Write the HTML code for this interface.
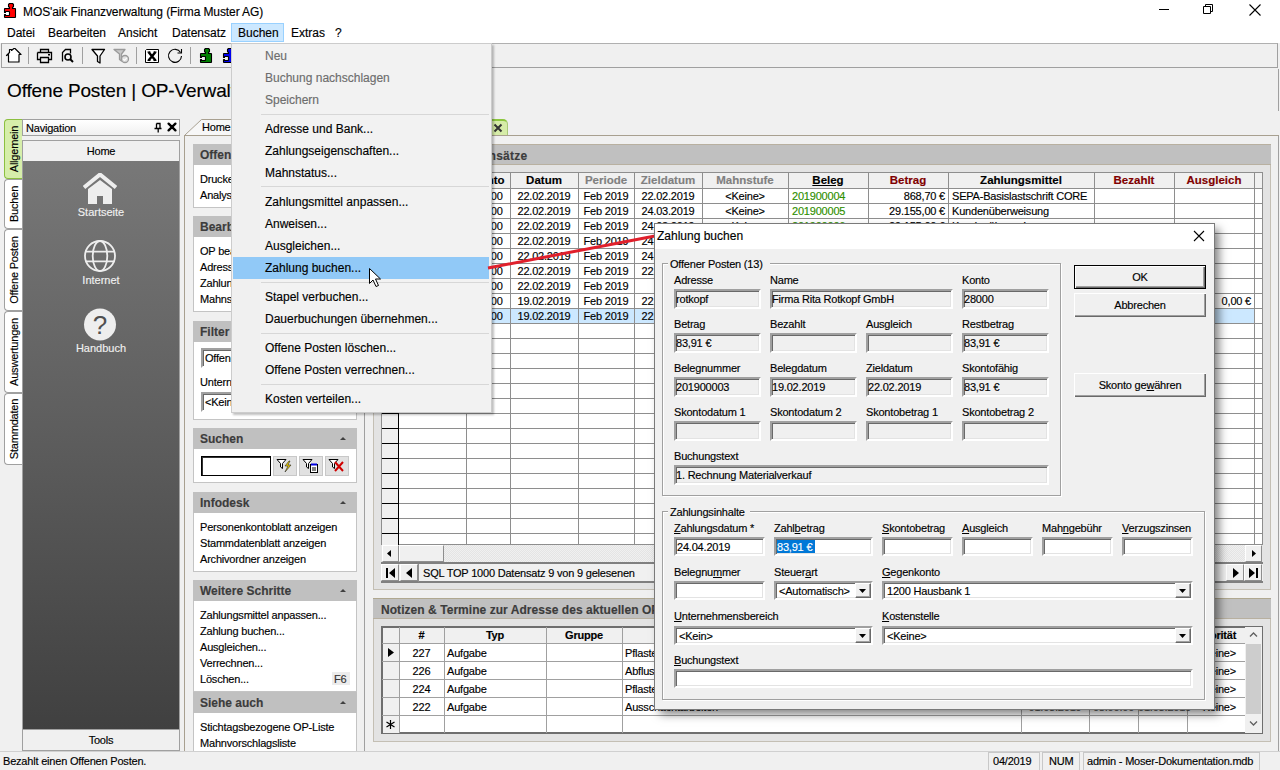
<!DOCTYPE html>
<html><head><meta charset="utf-8">
<style>
*{box-sizing:border-box;margin:0;padding:0}
html,body{width:1280px;height:770px;overflow:hidden;background:#f0f0f0;font-family:"Liberation Sans",sans-serif;font-size:11px;color:#000;position:relative;letter-spacing:-0.2px;-webkit-text-stroke:0.15px currentColor}
.a{position:absolute}
.t{position:absolute;white-space:nowrap;line-height:1}
.sep{position:absolute;width:1px;background:#a0a0a0}
.vtab{position:absolute;left:4px;width:18px;background:#fff;border:1px solid #a0a0a0;border-right:0;border-radius:4px 0 0 4px}
.vtab span{position:absolute;left:50%;top:50%;transform:translate(-50%,-50%) rotate(-90deg);white-space:nowrap;font-size:11px;line-height:1}
.sec-h{position:absolute;left:193px;width:164px;height:21px;background:#c0c0c0;font-weight:bold;color:#3c3c3c;font-size:12px;letter-spacing:0}
.sec-h span{position:absolute;left:7px;top:5px;white-space:nowrap;line-height:1}
.sec-h i{position:absolute;right:11px;top:9px;width:0;height:0;border-left:3px solid transparent;border-right:3px solid transparent;border-bottom:3px solid #404040}
.sec-b{position:absolute;left:193px;width:164px;background:#fff;border:1px solid #c4c4c4;border-top:0}
.sec-b div{position:absolute;left:6px;white-space:nowrap;line-height:1;font-size:11px;color:#000}
.mi{position:absolute;left:265px;letter-spacing:0;font-size:12px;white-space:nowrap;line-height:1}
.mi.dis{color:#6d6d6d}
.msep{position:absolute;left:261px;width:228px;height:1px;background:#d7d7d7}
.lbl{position:absolute;white-space:nowrap;font-size:11px;line-height:1}
.fld{position:absolute;height:20px;border:1px solid;border-color:#a0a0a0 #fff #fff #a0a0a0;background:#f0f0f0;font-size:11px;white-space:nowrap;overflow:hidden}
.fld span{position:absolute;left:3px;top:4px;line-height:1}
.btn{position:absolute;height:24px;border:1px solid #adadad;background:#e1e1e1;text-align:center;font-size:11px}
</style></head><body>
<!-- title bar + menu -->
<div class="a" style="left:0;top:0;width:1280px;height:43px;background:#fff"></div>
<svg class="a" style="left:0;top:0" width="20" height="20" viewBox="0 0 20 20"><path d="M9.5 3.5H12.5L13.5 4.5V6.5L12.5 7.5V8.5H15L15.5 9V17L15 17.5H5L4.5 17V14.5H5.5V15.5H9L9.5 15V12L9 11.5H5.5V12.5H4.5V9L5 8.5H9.5V7.5L8.5 6.5V4.5Z" fill="#f00" stroke="#000" stroke-width="1.1" stroke-linejoin="round"/></svg>
<div class="t" style="left:23px;top:6px;font-size:12px;letter-spacing:-0.1px;color:#000">MOS'aik Finanzverwaltung (Firma Muster AG)</div>
<svg class="a" style="left:1159px;top:4px" width="12" height="12"><path d="M0 5.5h10" stroke="#000" stroke-width="1"/></svg>
<svg class="a" style="left:1203px;top:4px" width="12" height="12"><path d="M0.5 2.5h7v7h-7z M2.5 2.5v-2h7v7h-2" fill="none" stroke="#000" stroke-width="1"/></svg>
<svg class="a" style="left:1249px;top:4px" width="12" height="12"><path d="M0.5 0.5l11 11M11.5 0.5l-11 11" stroke="#000" stroke-width="1.1"/></svg>
<div class="a" style="left:231px;top:23px;width:53px;height:19px;background:#cce8ff;border:1px solid #99d1ff"></div>
<div class="t" style="left:7px;top:27px;font-size:12px;letter-spacing:0">Datei</div>
<div class="t" style="left:48px;top:27px;font-size:12px;letter-spacing:0">Bearbeiten</div>
<div class="t" style="left:118px;top:27px;font-size:12px;letter-spacing:0">Ansicht</div>
<div class="t" style="left:172px;top:27px;font-size:12px;letter-spacing:0">Datensatz</div>
<div class="t" style="left:238px;top:27px;font-size:12px;letter-spacing:0">Buchen</div>
<div class="t" style="left:291px;top:27px;font-size:12px;letter-spacing:0">Extras</div>
<div class="t" style="left:335px;top:27px;font-size:12px;letter-spacing:0">?</div>
<!-- toolbar -->
<div class="a" style="left:1px;top:43px;width:1277px;height:25px;border:1px solid #a0a0a0;border-top-color:#b0b0b0;background:#f0f0f0"></div>
<div class="sep" style="left:28px;top:47px;height:17px"></div>
<div class="sep" style="left:82px;top:47px;height:17px"></div>
<div class="sep" style="left:136px;top:47px;height:17px"></div>
<div class="sep" style="left:190px;top:47px;height:17px"></div>
<svg class="a" style="left:5px;top:48px" width="17" height="16" viewBox="0 0 17 16"><path d="M1.5 7.5l3-3v-3h2v1l3-2.5 6.5 6.5h-2v7.5h-10.5v-7.5z" fill="#fff" stroke="#000" stroke-width="1.2" stroke-linejoin="round"/></svg>
<svg class="a" style="left:36px;top:48px" width="17" height="16" viewBox="0 0 17 16"><path d="M4.5 4.5v-3h8v3M1.5 4.5h14v7h-3M4.5 11.5h-3v-7M4.5 9.5h8v5h-8z" fill="none" stroke="#000" stroke-width="1.3"/><rect x="12" y="6" width="2" height="1.5" fill="#000"/></svg>
<svg class="a" style="left:60px;top:48px" width="15" height="16" viewBox="0 0 15 16"><path d="M2.5 13.5v-9l3-3h5v4" fill="none" stroke="#000" stroke-width="1.3"/><circle cx="8" cy="9" r="3" fill="none" stroke="#000" stroke-width="1.6"/><path d="M10 11l3 3" stroke="#000" stroke-width="2"/></svg>
<svg class="a" style="left:91px;top:48px" width="15" height="16" viewBox="0 0 15 16"><path d="M1 1.5h12.5l-4.5 6.5v7l-2.5-1.5v-5.5z" fill="#fff" stroke="#000" stroke-width="1.3" stroke-linejoin="round"/></svg>
<svg class="a" style="left:113px;top:48px" width="17" height="16" viewBox="0 0 17 16"><path d="M1 1.5h11l-3.5 4.5v7l-2-1.5v-5.5z" fill="#c8c8c8" stroke="#9a9a9a" stroke-width="1.3" stroke-linejoin="round"/><circle cx="12" cy="11" r="3.5" fill="#e0e0e0" stroke="#9a9a9a" stroke-width="1.3"/><path d="M10.3 11l1.3 1.3 2.2-2.5" fill="none" stroke="#fff" stroke-width="1.1"/></svg>
<svg class="a" style="left:144px;top:48px" width="16" height="16" viewBox="0 0 16 16"><path d="M1.5 2.5L2.5 1.5H14.5V14.5H1.5Z" fill="#fff" stroke="#000" stroke-width="1"/><path d="M4.5 4l7 8.5M11.5 4l-7 8.5" stroke="#000" stroke-width="2.4"/><path d="M3.5 4h3M9.5 4h3M3.5 12.5h3M9.5 12.5h3" stroke="#000" stroke-width="1"/></svg>
<svg class="a" style="left:167px;top:48px" width="16" height="16" viewBox="0 0 16 16"><path d="M13.6 4.5A6.5 6.5 0 1 0 14.5 8" fill="none" stroke="#000" stroke-width="1.1"/><path d="M10.5 5H14.5V1" fill="none" stroke="#000" stroke-width="1.1"/></svg>
<svg class="a" style="left:196px;top:45px" width="20" height="20" viewBox="0 0 20 20"><path d="M9.5 3.5H12.5L13.5 4.5V6.5L12.5 7.5V8.5H15L15.5 9V17L15 17.5H5L4.5 17V14.5H5.5V15.5H9L9.5 15V12L9 11.5H5.5V12.5H4.5V9L5 8.5H9.5V7.5L8.5 6.5V4.5Z" fill="#008000" stroke="#000" stroke-width="1.1" stroke-linejoin="round"/></svg>
<svg class="a" style="left:219px;top:45px" width="20" height="20" viewBox="0 0 20 20"><path d="M9.5 3.5H12.5L13.5 4.5V6.5L12.5 7.5V8.5H15L15.5 9V17L15 17.5H5L4.5 17V14.5H5.5V15.5H9L9.5 15V12L9 11.5H5.5V12.5H4.5V9L5 8.5H9.5V7.5L8.5 6.5V4.5Z" fill="#0000f0" stroke="#000" stroke-width="1.1" stroke-linejoin="round"/></svg>
<!-- page title -->
<div class="t" style="left:7px;top:81px;font-size:19px;letter-spacing:-0.15px">Offene Posten | OP-Verwaltung</div>
<div class="a" style="left:1278px;top:69px;width:1px;height:42px;background:#a0a0a0"></div>
<!-- left vertical tabs -->
<div class="vtab" style="top:119px;height:60px;background:#d6eeaa;border-color:#8cbf40"><span>Allgemein</span></div>
<div class="vtab" style="top:179px;height:50px"><span>Buchen</span></div>
<div class="vtab" style="top:229px;height:82px"><span>Offene Posten</span></div>
<div class="vtab" style="top:311px;height:82px"><span>Auswertungen</span></div>
<div class="vtab" style="top:393px;height:72px"><span>Stammdaten</span></div>
<!-- navigation panel -->
<div class="a" style="left:22px;top:119px;width:158px;height:17px;border:1px solid #a0a0a0;background:linear-gradient(#fff,#f0f0f0)"></div>
<div class="t" style="left:26px;top:123px;font-size:11px">Navigation</div>
<svg class="a" style="left:153px;top:122px" width="10" height="11"><path d="M3.5 1.5h3.5v4.5M3.5 1.5v4.5M1.5 6.5h7M5.2 6.5v4" fill="none" stroke="#000" stroke-width="1.3"/></svg>
<svg class="a" style="left:167px;top:122px" width="10" height="10"><path d="M1.6 1.6l6.8 6.8M8.4 1.6l-6.8 6.8" stroke="#000" stroke-width="2.3" stroke-linecap="round"/></svg>
<div class="a" style="left:22px;top:140px;width:158px;height:611px;border:1px solid #a0a0a0;background:#f0f0f0"></div>
<div class="t" style="left:22px;top:146px;width:158px;text-align:center;font-size:11px">Home</div>
<div class="a" style="left:23px;top:161px;width:156px;height:568px;background:linear-gradient(#787878,#404040)"></div>
<div class="a" style="left:23px;top:729px;width:156px;height:1px;background:#a0a0a0"></div>
<div class="t" style="left:22px;top:735px;width:158px;text-align:center;font-size:11px">Tools</div>
<!-- nav icons -->
<svg class="a" style="left:83px;top:173px" width="34" height="32" viewBox="0 0 34 32"><path d="M1 14.5L17 1.5 33 14.5" fill="none" stroke="#eee" stroke-width="4"/><path d="M5 16L17 7 29 16v15H20v-8h-6v8H5z" fill="#eee"/></svg>
<div class="t" style="left:22px;top:207px;width:158px;text-align:center;font-size:11px;letter-spacing:0;color:#f0f0f0">Startseite</div>
<svg class="a" style="left:83px;top:239px" width="34" height="34" viewBox="0 0 34 34"><g fill="none" stroke="#eee" stroke-width="1.8"><circle cx="17" cy="17" r="15"/><ellipse cx="17" cy="17" rx="7.3" ry="15"/><path d="M2.5 12.6h29M2.5 22.4h29"/></g></svg>
<div class="t" style="left:22px;top:275px;width:158px;text-align:center;font-size:11px;letter-spacing:0;color:#f0f0f0">Internet</div>
<svg class="a" style="left:83px;top:308px" width="34" height="34" viewBox="0 0 34 34"><circle cx="17" cy="16.5" r="16" fill="#eee"/><text x="17" y="26" text-anchor="middle" font-family="Liberation Sans" font-size="26" fill="#505050">?</text></svg>
<div class="t" style="left:22px;top:343px;width:158px;text-align:center;font-size:11px;letter-spacing:0;color:#f0f0f0">Handbuch</div>
<!-- status bar -->
<div class="a" style="left:0;top:751px;width:1280px;height:19px;background:#f0f0f0;border-top:1px solid #d0d0d0"></div>
<div class="t" style="left:3px;top:756px;font-size:11px">Bezahlt einen Offenen Posten.</div>
<div class="a" style="left:988px;top:752px;width:52px;height:18px;border:1px solid #c8c8c8;border-bottom:0"></div>
<div class="t" style="left:993px;top:756px;font-size:11px">04/2019</div>
<div class="a" style="left:1042px;top:752px;width:38px;height:18px;border:1px solid #c8c8c8;border-bottom:0"></div>
<div class="t" style="left:1049px;top:756px;font-size:11px">NUM</div>
<div class="a" style="left:1083px;top:752px;width:177px;height:18px;border:1px solid #c8c8c8;border-bottom:0"></div>
<div class="t" style="left:1087px;top:756px;font-size:11px">admin - Moser-Dokumentation.mdb</div>
<!-- tab strip -->
<svg class="a" style="left:184px;top:118px" width="330" height="19"><path d="M0.5 17.5L17.5 1.5H296" fill="none" stroke="#a8a090"/><path d="M1 18L18 2H295V18z" fill="#f7f7f7"/><path d="M18 1.5H295" stroke="#a8a090"/></svg>
<div class="t" style="left:202px;top:122px;font-size:11px">Home</div>
<div class="a" style="left:296px;top:119px;width:212px;height:17px;background:#d6eca8;border:1px solid #a8c878;border-top:2px solid #8cc63f;border-bottom:0;border-radius:0 5px 0 0"></div>
<svg class="a" style="left:493px;top:123px" width="10" height="10"><path d="M1.5 1.5l7 7M8.5 1.5l-7 7" stroke="#333" stroke-width="2"/></svg>
<!-- content border -->
<div class="a" style="left:184px;top:135px;width:1095px;height:616px;border:1px solid #a8a090;border-right:0;border-bottom:0;background:#f0f0f0"></div>
<div class="a" style="left:364px;top:136px;width:1px;height:615px;background:#a0a0a0"></div><div class="a" style="left:1278px;top:136px;width:1px;height:615px;background:#a0a0a0"></div>
<!-- task pane -->
<div class="sec-h" style="top:144px"><span>Offene Posten</span><i></i></div>
<div class="sec-b" style="top:165px;height:43px"><div style="top:9px">Drucken</div><div style="top:25px">Analyse</div></div>
<div class="sec-h" style="top:216px"><span>Bearbeiten</span><i></i></div>
<div class="sec-b" style="top:237px;height:75px"><div style="top:9px">OP bearbeiten</div><div style="top:25px">Adresse</div><div style="top:41px">Zahlungseigenschaften</div><div style="top:57px">Mahnstatus</div></div>
<div class="sec-h" style="top:321px"><span>Filter</span><i></i></div>
<div class="sec-b" style="top:342px;height:78px">
  <div style="top:6px;left:7px;width:150px;height:20px;border:2px solid;border-color:#a0a0a0 #fff #fff #a0a0a0;box-shadow:inset 1px 1px 0 #696969;background:#fff"></div><div style="top:11px;left:11px">Offene Posten</div>
  <div style="top:35px">Unternehmensbereich</div>
  <div style="top:50px;left:7px;width:150px;height:20px;border:2px solid;border-color:#a0a0a0 #fff #fff #a0a0a0;box-shadow:inset 1px 1px 0 #696969;background:#fff"></div><div style="top:55px;left:11px">&lt;Kein&gt;</div>
</div>
<div class="sec-h" style="top:428px"><span>Suchen</span><i></i></div>
<div class="sec-b" style="top:449px;height:34px"></div>
<div class="a" style="left:201px;top:456px;width:70px;height:20px;border:1px solid #000;box-shadow:inset 1px 1px 0 #333;background:#fff"></div>
<div class="a" style="left:273px;top:456px;width:24px;height:20px;background:#e1e1e1;border:1px solid #c8c8c8"></div>
<div class="a" style="left:299px;top:456px;width:24px;height:20px;background:#e1e1e1;border:1px solid #c8c8c8"></div>
<div class="a" style="left:325px;top:456px;width:24px;height:20px;background:#e1e1e1;border:1px solid #c8c8c8"></div>
<svg class="a" style="left:276px;top:458px" width="18" height="16"><path d="M1 1.5h9l-3.5 4v5l-2-1.5v-3.5z" fill="#fff" stroke="#000"/><path d="M13 3l-4 5h3l-3 6 6-7h-3l2-4z" fill="#f0d000" stroke="#222" stroke-width=".6"/></svg>
<svg class="a" style="left:302px;top:458px" width="18" height="16"><path d="M1 1.5h9l-3.5 4v5l-2-1.5v-3.5z" fill="#fff" stroke="#000"/><rect x="8.5" y="6.5" width="7" height="8" fill="#fff" stroke="#000"/><path d="M9 6.5h6" stroke="#0000e0" stroke-width="2"/><path d="M10 10h4M10 12h4" stroke="#000"/></svg>
<svg class="a" style="left:328px;top:458px" width="18" height="16"><path d="M1 1.5h9l-3.5 4v5l-2-1.5v-3.5z" fill="#fff" stroke="#000"/><path d="M7 4l8 9M15 4l-8 9" stroke="#d00000" stroke-width="2"/></svg>
<div class="sec-h" style="top:492px"><span>Infodesk</span><i></i></div>
<div class="sec-b" style="top:513px;height:59px"><div style="top:9px">Personenkontoblatt anzeigen</div><div style="top:25px">Stammdatenblatt anzeigen</div><div style="top:41px">Archivordner anzeigen</div></div>
<div class="sec-h" style="top:580px"><span>Weitere Schritte</span><i></i></div>
<div class="sec-b" style="top:601px;height:91px"><div style="top:9px">Zahlungsmittel anpassen...</div><div style="top:25px">Zahlung buchen...</div><div style="top:41px">Ausgleichen...</div><div style="top:57px">Verrechnen...</div><div style="top:73px">Löschen...</div><div style="top:71px;left:138px;width:18px;height:13px;background:#ececec"></div><div style="top:73px;left:140px;color:#333">F6</div></div>
<div class="sec-h" style="top:692px"><span>Siehe auch</span><i></i></div>
<div class="sec-b" style="top:713px;height:38px;border-bottom:0"><div style="top:9px">Stichtagsbezogene OP-Liste</div><div style="top:25px">Mahnvorschlagsliste</div></div>
<!-- main group -->

<div class="a" style="left:373px;top:144px;width:898px;height:21px;background:#c0c0c0;border-top:1px solid #b8b0a0;border-bottom:1px solid #b8b0a0"></div>
<div class="t" style="left:381px;top:150px;font-size:12px;letter-spacing:0.25px;font-weight:bold;color:#3c3c3c">Offene Posten / Umsätze</div>
<div class="a" style="left:373px;top:165px;width:898px;height:425px;border-left:1px solid #c4bfb4;border-right:1px solid #c4bfb4;border-bottom:1px solid #c4bfb4"></div>
<!--GRID1S--><div class="a" style="left:374px;top:165px;width:896px;height:424px;background:#e3e3e3"></div>
<div class="a" style="left:381px;top:172px;width:882px;height:373px;background:#fff;border:1px solid #8e8e8e"></div>
<div class="a" style="left:382px;top:173px;width:880px;height:15px;background:#f0f0f0"></div>
<div class="a" style="left:382px;top:188px;width:16px;height:357px;background:#f0f0f0"></div>
<div class="a" style="left:399px;top:309px;width:855px;height:14px;background:#cce8ff"></div>
<div class="a" style="left:382px;top:188px;width:16px;height:1px;background:#000"></div>
<div class="a" style="left:398px;top:188px;width:864px;height:1px;background:#8e8e8e"></div>
<div class="a" style="left:382px;top:203px;width:16px;height:1px;background:#000"></div>
<div class="a" style="left:398px;top:203px;width:864px;height:1px;background:#8e8e8e"></div>
<div class="a" style="left:382px;top:218px;width:16px;height:1px;background:#000"></div>
<div class="a" style="left:398px;top:218px;width:864px;height:1px;background:#8e8e8e"></div>
<div class="a" style="left:382px;top:233px;width:16px;height:1px;background:#000"></div>
<div class="a" style="left:398px;top:233px;width:864px;height:1px;background:#8e8e8e"></div>
<div class="a" style="left:382px;top:248px;width:16px;height:1px;background:#000"></div>
<div class="a" style="left:398px;top:248px;width:864px;height:1px;background:#8e8e8e"></div>
<div class="a" style="left:382px;top:263px;width:16px;height:1px;background:#000"></div>
<div class="a" style="left:398px;top:263px;width:864px;height:1px;background:#8e8e8e"></div>
<div class="a" style="left:382px;top:278px;width:16px;height:1px;background:#000"></div>
<div class="a" style="left:398px;top:278px;width:864px;height:1px;background:#8e8e8e"></div>
<div class="a" style="left:382px;top:293px;width:16px;height:1px;background:#000"></div>
<div class="a" style="left:398px;top:293px;width:864px;height:1px;background:#8e8e8e"></div>
<div class="a" style="left:382px;top:308px;width:16px;height:1px;background:#000"></div>
<div class="a" style="left:398px;top:308px;width:864px;height:1px;background:#8e8e8e"></div>
<div class="a" style="left:382px;top:323px;width:16px;height:1px;background:#000"></div>
<div class="a" style="left:398px;top:323px;width:864px;height:1px;background:#8e8e8e"></div>
<div class="a" style="left:382px;top:338px;width:16px;height:1px;background:#000"></div>
<div class="a" style="left:398px;top:338px;width:864px;height:1px;background:#8e8e8e"></div>
<div class="a" style="left:382px;top:353px;width:16px;height:1px;background:#000"></div>
<div class="a" style="left:398px;top:353px;width:864px;height:1px;background:#8e8e8e"></div>
<div class="a" style="left:382px;top:368px;width:16px;height:1px;background:#000"></div>
<div class="a" style="left:398px;top:368px;width:864px;height:1px;background:#8e8e8e"></div>
<div class="a" style="left:382px;top:383px;width:16px;height:1px;background:#000"></div>
<div class="a" style="left:398px;top:383px;width:864px;height:1px;background:#8e8e8e"></div>
<div class="a" style="left:382px;top:398px;width:16px;height:1px;background:#000"></div>
<div class="a" style="left:398px;top:398px;width:864px;height:1px;background:#8e8e8e"></div>
<div class="a" style="left:382px;top:413px;width:16px;height:1px;background:#000"></div>
<div class="a" style="left:398px;top:413px;width:864px;height:1px;background:#8e8e8e"></div>
<div class="a" style="left:382px;top:428px;width:16px;height:1px;background:#000"></div>
<div class="a" style="left:398px;top:428px;width:864px;height:1px;background:#8e8e8e"></div>
<div class="a" style="left:382px;top:443px;width:16px;height:1px;background:#000"></div>
<div class="a" style="left:398px;top:443px;width:864px;height:1px;background:#8e8e8e"></div>
<div class="a" style="left:382px;top:458px;width:16px;height:1px;background:#000"></div>
<div class="a" style="left:398px;top:458px;width:864px;height:1px;background:#8e8e8e"></div>
<div class="a" style="left:382px;top:473px;width:16px;height:1px;background:#000"></div>
<div class="a" style="left:398px;top:473px;width:864px;height:1px;background:#8e8e8e"></div>
<div class="a" style="left:382px;top:488px;width:16px;height:1px;background:#000"></div>
<div class="a" style="left:398px;top:488px;width:864px;height:1px;background:#8e8e8e"></div>
<div class="a" style="left:382px;top:503px;width:16px;height:1px;background:#000"></div>
<div class="a" style="left:398px;top:503px;width:864px;height:1px;background:#8e8e8e"></div>
<div class="a" style="left:382px;top:518px;width:16px;height:1px;background:#000"></div>
<div class="a" style="left:398px;top:518px;width:864px;height:1px;background:#8e8e8e"></div>
<div class="a" style="left:382px;top:533px;width:16px;height:1px;background:#000"></div>
<div class="a" style="left:398px;top:533px;width:864px;height:1px;background:#8e8e8e"></div>
<div class="a" style="left:398px;top:173px;width:1px;height:372px;background:#000"></div>
<div class="a" style="left:466px;top:173px;width:1px;height:372px;background:#8e8e8e"></div>
<div class="a" style="left:510px;top:173px;width:1px;height:372px;background:#8e8e8e"></div>
<div class="a" style="left:578px;top:173px;width:1px;height:372px;background:#8e8e8e"></div>
<div class="a" style="left:634px;top:173px;width:1px;height:372px;background:#8e8e8e"></div>
<div class="a" style="left:702px;top:173px;width:1px;height:372px;background:#8e8e8e"></div>
<div class="a" style="left:788px;top:173px;width:1px;height:372px;background:#8e8e8e"></div>
<div class="a" style="left:868px;top:173px;width:1px;height:372px;background:#8e8e8e"></div>
<div class="a" style="left:948px;top:173px;width:1px;height:372px;background:#8e8e8e"></div>
<div class="a" style="left:1094px;top:173px;width:1px;height:372px;background:#8e8e8e"></div>
<div class="a" style="left:1174px;top:173px;width:1px;height:372px;background:#8e8e8e"></div>
<div class="a" style="left:1254px;top:173px;width:1px;height:372px;background:#8e8e8e"></div>
<div class="t" style="left:466px;top:175px;width:44px;text-align:center;font-size:11.5px;letter-spacing:0;font-weight:bold;color:#000;">Konto</div>
<div class="t" style="left:510px;top:175px;width:68px;text-align:center;font-size:11.5px;letter-spacing:0;font-weight:bold;color:#000;">Datum</div>
<div class="t" style="left:578px;top:175px;width:56px;text-align:center;font-size:11.5px;letter-spacing:0;font-weight:bold;color:#808080;">Periode</div>
<div class="t" style="left:634px;top:175px;width:68px;text-align:center;font-size:11.5px;letter-spacing:0;font-weight:bold;color:#808080;">Zieldatum</div>
<div class="t" style="left:702px;top:175px;width:86px;text-align:center;font-size:11.5px;letter-spacing:0;font-weight:bold;color:#808080;">Mahnstufe</div>
<div class="t" style="left:788px;top:175px;width:80px;text-align:center;font-size:11.5px;letter-spacing:0;font-weight:bold;color:#000;text-decoration:underline;">Beleg</div>
<div class="t" style="left:868px;top:175px;width:80px;text-align:center;font-size:11.5px;letter-spacing:0;font-weight:bold;color:#800000;">Betrag</div>
<div class="t" style="left:948px;top:175px;width:146px;text-align:center;font-size:11.5px;letter-spacing:0;font-weight:bold;color:#000;">Zahlungsmittel</div>
<div class="t" style="left:1094px;top:175px;width:80px;text-align:center;font-size:11.5px;letter-spacing:0;font-weight:bold;color:#800000;">Bezahlt</div>
<div class="t" style="left:1174px;top:175px;width:80px;text-align:center;font-size:11.5px;letter-spacing:0;font-weight:bold;color:#800000;">Ausgleich</div>
<div class="t" style="left:473px;top:191px;font-size:11px;color:#000">28000</div>
<div class="t" style="left:510px;top:191px;width:68px;text-align:center;font-size:11px;color:#000">22.02.2019</div>
<div class="t" style="left:578px;top:191px;width:56px;text-align:center;font-size:11px;color:#000">Feb 2019</div>
<div class="t" style="left:634px;top:191px;width:68px;text-align:center;font-size:11px;color:#000">22.02.2019</div>
<div class="t" style="left:702px;top:191px;width:86px;text-align:center;font-size:11px;color:#000">&lt;Keine&gt;</div>
<div class="t" style="left:792px;top:191px;font-size:11px;color:#2f8f00">201900004</div>
<div class="t" style="left:868px;top:191px;width:77px;text-align:right;font-size:11px;color:#000">868,70 €</div>
<div class="t" style="left:952px;top:191px;font-size:11px;color:#000">SEPA-Basislastschrift CORE</div>
<div class="t" style="left:473px;top:206px;font-size:11px;color:#000">28000</div>
<div class="t" style="left:510px;top:206px;width:68px;text-align:center;font-size:11px;color:#000">22.02.2019</div>
<div class="t" style="left:578px;top:206px;width:56px;text-align:center;font-size:11px;color:#000">Feb 2019</div>
<div class="t" style="left:634px;top:206px;width:68px;text-align:center;font-size:11px;color:#000">24.03.2019</div>
<div class="t" style="left:702px;top:206px;width:86px;text-align:center;font-size:11px;color:#000">&lt;Keine&gt;</div>
<div class="t" style="left:792px;top:206px;font-size:11px;color:#2f8f00">201900005</div>
<div class="t" style="left:868px;top:206px;width:77px;text-align:right;font-size:11px;color:#000">29.155,00 €</div>
<div class="t" style="left:952px;top:206px;font-size:11px;color:#000">Kundenüberweisung</div>
<div class="t" style="left:473px;top:221px;font-size:11px;color:#000">28000</div>
<div class="t" style="left:510px;top:221px;width:68px;text-align:center;font-size:11px;color:#000">22.02.2019</div>
<div class="t" style="left:578px;top:221px;width:56px;text-align:center;font-size:11px;color:#000">Feb 2019</div>
<div class="t" style="left:634px;top:221px;width:68px;text-align:center;font-size:11px;color:#000">24.03.2019</div>
<div class="t" style="left:702px;top:221px;width:86px;text-align:center;font-size:11px;color:#000">&lt;Keine&gt;</div>
<div class="t" style="left:792px;top:221px;font-size:11px;color:#2f8f00">201900006</div>
<div class="t" style="left:868px;top:221px;width:77px;text-align:right;font-size:11px;color:#000">29.155,00 €</div>
<div class="t" style="left:952px;top:221px;font-size:11px;color:#000">Kundenüberweisung</div>
<div class="t" style="left:473px;top:236px;font-size:11px;color:#000">28000</div>
<div class="t" style="left:510px;top:236px;width:68px;text-align:center;font-size:11px;color:#000">22.02.2019</div>
<div class="t" style="left:578px;top:236px;width:56px;text-align:center;font-size:11px;color:#000">Feb 2019</div>
<div class="t" style="left:634px;top:236px;width:68px;text-align:center;font-size:11px;color:#000">24.03.2019</div>
<div class="t" style="left:702px;top:236px;width:86px;text-align:center;font-size:11px;color:#000">&lt;Keine&gt;</div>
<div class="t" style="left:792px;top:236px;font-size:11px;color:#2f8f00">201900007</div>
<div class="t" style="left:868px;top:236px;width:77px;text-align:right;font-size:11px;color:#000">29.155,00 €</div>
<div class="t" style="left:952px;top:236px;font-size:11px;color:#000">Kundenüberweisung</div>
<div class="t" style="left:473px;top:251px;font-size:11px;color:#000">28000</div>
<div class="t" style="left:510px;top:251px;width:68px;text-align:center;font-size:11px;color:#000">22.02.2019</div>
<div class="t" style="left:578px;top:251px;width:56px;text-align:center;font-size:11px;color:#000">Feb 2019</div>
<div class="t" style="left:634px;top:251px;width:68px;text-align:center;font-size:11px;color:#000">24.03.2019</div>
<div class="t" style="left:702px;top:251px;width:86px;text-align:center;font-size:11px;color:#000">&lt;Keine&gt;</div>
<div class="t" style="left:792px;top:251px;font-size:11px;color:#2f8f00">201900008</div>
<div class="t" style="left:868px;top:251px;width:77px;text-align:right;font-size:11px;color:#000">29.155,00 €</div>
<div class="t" style="left:952px;top:251px;font-size:11px;color:#000">Kundenüberweisung</div>
<div class="t" style="left:473px;top:266px;font-size:11px;color:#000">28000</div>
<div class="t" style="left:510px;top:266px;width:68px;text-align:center;font-size:11px;color:#000">22.02.2019</div>
<div class="t" style="left:578px;top:266px;width:56px;text-align:center;font-size:11px;color:#000">Feb 2019</div>
<div class="t" style="left:634px;top:266px;width:68px;text-align:center;font-size:11px;color:#000">22.02.2019</div>
<div class="t" style="left:702px;top:266px;width:86px;text-align:center;font-size:11px;color:#000">&lt;Keine&gt;</div>
<div class="t" style="left:792px;top:266px;font-size:11px;color:#2f8f00">201900009</div>
<div class="t" style="left:868px;top:266px;width:77px;text-align:right;font-size:11px;color:#000">868,70 €</div>
<div class="t" style="left:952px;top:266px;font-size:11px;color:#000">Kundenüberweisung</div>
<div class="t" style="left:473px;top:281px;font-size:11px;color:#000">28000</div>
<div class="t" style="left:510px;top:281px;width:68px;text-align:center;font-size:11px;color:#000">22.02.2019</div>
<div class="t" style="left:578px;top:281px;width:56px;text-align:center;font-size:11px;color:#000">Feb 2019</div>
<div class="t" style="left:702px;top:281px;width:86px;text-align:center;font-size:11px;color:#000">&lt;Keine&gt;</div>
<div class="t" style="left:792px;top:281px;font-size:11px;color:#2f8f00">201900010</div>
<div class="t" style="left:868px;top:281px;width:77px;text-align:right;font-size:11px;color:#000">868,70 €</div>
<div class="t" style="left:952px;top:281px;font-size:11px;color:#000">Kundenüberweisung</div>
<div class="t" style="left:473px;top:296px;font-size:11px;color:#000">28000</div>
<div class="t" style="left:510px;top:296px;width:68px;text-align:center;font-size:11px;color:#000">19.02.2019</div>
<div class="t" style="left:578px;top:296px;width:56px;text-align:center;font-size:11px;color:#000">Feb 2019</div>
<div class="t" style="left:634px;top:296px;width:68px;text-align:center;font-size:11px;color:#000">22.02.2019</div>
<div class="t" style="left:702px;top:296px;width:86px;text-align:center;font-size:11px;color:#000">&lt;Keine&gt;</div>
<div class="t" style="left:792px;top:296px;font-size:11px;color:#2f8f00">201900002</div>
<div class="t" style="left:868px;top:296px;width:77px;text-align:right;font-size:11px;color:#000">83,91 €</div>
<div class="t" style="left:952px;top:296px;font-size:11px;color:#000">Kundenüberweisung</div>
<div class="t" style="left:1174px;top:296px;width:77px;text-align:right;font-size:11px;color:#000">0,00 €</div>
<div class="t" style="left:473px;top:311px;font-size:11px;color:#000">28000</div>
<div class="t" style="left:510px;top:311px;width:68px;text-align:center;font-size:11px;color:#000">19.02.2019</div>
<div class="t" style="left:578px;top:311px;width:56px;text-align:center;font-size:11px;color:#000">Feb 2019</div>
<div class="t" style="left:634px;top:311px;width:68px;text-align:center;font-size:11px;color:#000">22.02.2019</div>
<div class="t" style="left:702px;top:311px;width:86px;text-align:center;font-size:11px;color:#000">&lt;Keine&gt;</div>
<div class="t" style="left:792px;top:311px;font-size:11px;color:#2f8f00">201900003</div>
<div class="t" style="left:868px;top:311px;width:77px;text-align:right;font-size:11px;color:#000">83,91 €</div>
<div class="t" style="left:952px;top:311px;font-size:11px;color:#000">Kundenüberweisung</div>
<div class="a" style="left:382px;top:545px;width:880px;height:17px;background:repeating-conic-gradient(#f0f0f0 0 25%,#e4e4e4 0 50%) 0 0/2px 2px"></div>
<div class="a" style="left:382px;top:545px;width:17px;height:17px;background:#f0f0f0;border:1px solid;border-color:#fff #8e8e8e #8e8e8e #fff"></div>
<svg class="a" style="left:386px;top:549px" width="8" height="9"><path d="M5 1v7L1 4.5z" fill="#000"/></svg>
<div class="a" style="left:399px;top:545px;width:45px;height:17px;background:#f0f0f0;border:1px solid;border-color:#fff #8e8e8e #8e8e8e #fff"></div>
<div class="a" style="left:1245px;top:545px;width:17px;height:17px;background:#f0f0f0;border:1px solid;border-color:#fff #8e8e8e #8e8e8e #fff"></div>
<svg class="a" style="left:1250px;top:549px" width="8" height="9"><path d="M2 1v7l4-3.5z" fill="#000"/></svg>
<div class="a" style="left:381px;top:562px;width:882px;height:2px;background:#808080"></div>
<div class="a" style="left:381px;top:564px;width:882px;height:19px;background:#f0f0f0;border-bottom:2px solid #808080"></div>
<div class="a" style="left:381px;top:564px;width:18px;height:17px;background:#f0f0f0;border:1px solid;border-color:#fff #8e8e8e #8e8e8e #fff"></div>
<div class="a" style="left:400px;top:564px;width:18px;height:17px;background:#f0f0f0;border:1px solid;border-color:#fff #8e8e8e #8e8e8e #fff"></div>
<div class="a" style="left:1226px;top:564px;width:18px;height:17px;background:#f0f0f0;border:1px solid;border-color:#fff #8e8e8e #8e8e8e #fff"></div>
<div class="a" style="left:1244px;top:564px;width:18px;height:17px;background:#f0f0f0;border:1px solid;border-color:#fff #8e8e8e #8e8e8e #fff"></div>
<div class="a" style="left:418px;top:564px;width:1px;height:18px;background:#8e8e8e"></div>
<svg class="a" style="left:385px;top:567px" width="11" height="12"><path d="M1 1h2v10H1z M10 1v10L4 6z" fill="#000"/></svg>
<svg class="a" style="left:404px;top:567px" width="11" height="12"><path d="M8 1v10L2 6z" fill="#000"/></svg>
<svg class="a" style="left:1230px;top:567px" width="11" height="12"><path d="M3 1v10l6-5z" fill="#000"/></svg>
<svg class="a" style="left:1248px;top:567px" width="11" height="12"><path d="M1 1v10l6-5z M8 1h2v10H8z" fill="#000"/></svg>
<div class="t" style="left:423px;top:568px;font-size:11px">SQL TOP 1000 Datensatz 9 von 9 gelesenen</div><!--GRID1E-->
<!-- notes group -->
<div class="a" style="left:373px;top:598px;width:898px;height:144px;border:1px solid #c4bfb4"></div>
<div class="a" style="left:373px;top:598px;width:898px;height:21px;background:#c0c0c0;border-top:1px solid #b0a890;border-bottom:1px solid #b8b0a0"></div>
<div class="t" style="left:381px;top:604px;font-size:12px;letter-spacing:0.05px;font-weight:bold;color:#3c3c3c">Notizen &amp; Termine zur Adresse des aktuellen OP</div>
<!--GRID2S--><div class="a" style="left:374px;top:619px;width:896px;height:122px;background:#e3e3e3"></div>
<div class="a" style="left:381px;top:626px;width:882px;height:108px;background:#fff;border:2px solid #6e6e6e"></div>
<div class="a" style="left:383px;top:628px;width:862px;height:15px;background:#f0f0f0"></div>
<div class="a" style="left:383px;top:643px;width:16px;height:90px;background:#f0f0f0"></div>
<div class="a" style="left:382px;top:643px;width:863px;height:1px;background:#a0a0a0"></div>
<div class="a" style="left:382px;top:661px;width:863px;height:1px;background:#a0a0a0"></div>
<div class="a" style="left:382px;top:679px;width:863px;height:1px;background:#a0a0a0"></div>
<div class="a" style="left:382px;top:697px;width:863px;height:1px;background:#a0a0a0"></div>
<div class="a" style="left:382px;top:715px;width:863px;height:1px;background:#a0a0a0"></div>
<div class="a" style="left:399px;top:627px;width:1px;height:106px;background:#a0a0a0"></div>
<div class="a" style="left:444px;top:627px;width:1px;height:106px;background:#a0a0a0"></div>
<div class="a" style="left:546px;top:627px;width:1px;height:106px;background:#a0a0a0"></div>
<div class="a" style="left:622px;top:627px;width:1px;height:106px;background:#a0a0a0"></div>
<div class="a" style="left:1021px;top:627px;width:1px;height:106px;background:#a0a0a0"></div>
<div class="a" style="left:1089px;top:627px;width:1px;height:106px;background:#a0a0a0"></div>
<div class="a" style="left:1138px;top:627px;width:1px;height:106px;background:#a0a0a0"></div>
<div class="a" style="left:1187px;top:627px;width:1px;height:106px;background:#a0a0a0"></div>
<div class="a" style="left:1245px;top:627px;width:1px;height:106px;background:#a0a0a0"></div>
<div class="t" style="left:399px;top:630px;width:45px;text-align:center;font-size:11px;font-weight:bold">#</div>
<div class="t" style="left:444px;top:630px;width:102px;text-align:center;font-size:11px;font-weight:bold">Typ</div>
<div class="t" style="left:546px;top:630px;width:76px;text-align:center;font-size:11px;font-weight:bold">Gruppe</div>
<div class="t" style="left:622px;top:630px;width:399px;text-align:center;font-size:11px;font-weight:bold">Betreff</div>
<div class="t" style="left:1021px;top:630px;width:68px;text-align:center;font-size:11px;font-weight:bold">Datum</div>
<div class="t" style="left:1089px;top:630px;width:49px;text-align:center;font-size:11px;font-weight:bold">Uhrzeit</div>
<div class="t" style="left:1138px;top:630px;width:49px;text-align:center;font-size:11px;font-weight:bold">Erledigt</div>
<div class="t" style="left:1187px;top:630px;width:58px;text-align:center;font-size:11px;font-weight:bold">Priorität</div>
<div class="t" style="left:399px;top:648px;width:45px;text-align:center;font-size:11px">227</div>
<div class="t" style="left:447px;top:648px;font-size:11px">Aufgabe</div>
<div class="t" style="left:625px;top:648px;font-size:11px">Pflasterarbeiten</div>
<div class="t" style="left:1021px;top:648px;width:68px;text-align:center;font-size:11px;color:#555">12.03.2019</div>
<div class="t" style="left:1089px;top:648px;width:49px;text-align:center;font-size:11px;color:#555">08:00:00</div>
<div class="t" style="left:1138px;top:648px;width:49px;text-align:center;font-size:11px;color:#555">12.03.2019</div>
<div class="t" style="left:1187px;top:648px;width:49px;text-align:right;font-size:11px">&lt;Keine&gt;</div>
<div class="t" style="left:399px;top:666px;width:45px;text-align:center;font-size:11px">226</div>
<div class="t" style="left:447px;top:666px;font-size:11px">Aufgabe</div>
<div class="t" style="left:625px;top:666px;font-size:11px">Abflussrohr verlegen</div>
<div class="t" style="left:1021px;top:666px;width:68px;text-align:center;font-size:11px;color:#555">11.03.2019</div>
<div class="t" style="left:1089px;top:666px;width:49px;text-align:center;font-size:11px;color:#555">08:00:00</div>
<div class="t" style="left:1138px;top:666px;width:49px;text-align:center;font-size:11px;color:#555">11.03.2019</div>
<div class="t" style="left:1187px;top:666px;width:49px;text-align:right;font-size:11px">&lt;Keine&gt;</div>
<div class="t" style="left:399px;top:684px;width:45px;text-align:center;font-size:11px">224</div>
<div class="t" style="left:447px;top:684px;font-size:11px">Aufgabe</div>
<div class="t" style="left:625px;top:684px;font-size:11px">Pflasterarbeiten</div>
<div class="t" style="left:1021px;top:684px;width:68px;text-align:center;font-size:11px;color:#555">05.03.2019</div>
<div class="t" style="left:1089px;top:684px;width:49px;text-align:center;font-size:11px;color:#555">08:00:00</div>
<div class="t" style="left:1138px;top:684px;width:49px;text-align:center;font-size:11px;color:#555">05.03.2019</div>
<div class="t" style="left:1187px;top:684px;width:49px;text-align:right;font-size:11px">&lt;Keine&gt;</div>
<div class="t" style="left:399px;top:702px;width:45px;text-align:center;font-size:11px">222</div>
<div class="t" style="left:447px;top:702px;font-size:11px">Aufgabe</div>
<div class="t" style="left:625px;top:702px;font-size:11px">Ausschachtarbeiten</div>
<div class="t" style="left:1021px;top:702px;width:68px;text-align:center;font-size:11px;color:#555">01.03.2019</div>
<div class="t" style="left:1089px;top:702px;width:49px;text-align:center;font-size:11px;color:#555">08:00:00</div>
<div class="t" style="left:1138px;top:702px;width:49px;text-align:center;font-size:11px;color:#555">01.03.2019</div>
<div class="t" style="left:1187px;top:702px;width:49px;text-align:right;font-size:11px">&lt;Keine&gt;</div>
<svg class="a" style="left:386px;top:647px" width="9" height="11"><path d="M2 1v9l6-4.5z" fill="#000"/></svg>
<svg class="a" style="left:385px;top:719px" width="11" height="11"><path d="M5.5 1v9M1.5 3l8 5M9.5 3l-8 5" stroke="#000" stroke-width="1.2"/></svg>
<div class="a" style="left:1245px;top:627px;width:17px;height:106px;background:#f0f0f0"></div>
<div class="a" style="left:1246px;top:644px;width:15px;height:70px;background:#cdcdcd"></div>
<svg class="a" style="left:1249px;top:631px" width="9" height="7"><path d="M1 5.5l3.5-3.5 3.5 3.5" fill="none" stroke="#606060" stroke-width="1.3"/></svg>
<svg class="a" style="left:1249px;top:720px" width="9" height="7"><path d="M1 1.5l3.5 3.5 3.5-3.5" fill="none" stroke="#606060" stroke-width="1.3"/></svg><!--GRID2E-->

<!--MENUS--><div class="a" style="left:231px;top:43px;width:261px;height:370px;background:#f2f2f2;border:1px solid #cccccc;box-shadow:2px 2px 2px rgba(0,0,0,.25)"></div>
<div class="a" style="left:232px;top:44px;width:28px;height:368px;background:#f0f0f0"></div>
<div class="mi dis" style="top:50px">Neu</div>
<div class="mi dis" style="top:72px">Buchung nachschlagen</div>
<div class="mi dis" style="top:94px">Speichern</div>
<div class="msep" style="top:114px"></div>
<div class="mi" style="top:123px">Adresse und Bank...</div>
<div class="mi" style="top:145px">Zahlungseigenschaften...</div>
<div class="mi" style="top:167px">Mahnstatus...</div>
<div class="msep" style="top:186px"></div>
<div class="mi" style="top:196px">Zahlungsmittel anpassen...</div>
<div class="mi" style="top:218px">Anweisen...</div>
<div class="mi" style="top:240px">Ausgleichen...</div>
<div class="a" style="left:233px;top:257px;width:256px;height:22px;background:#91c9f7"></div>
<div class="mi" style="top:262px">Zahlung buchen...</div>
<div class="msep" style="top:282px"></div>
<div class="mi" style="top:291px">Stapel verbuchen...</div>
<div class="mi" style="top:313px">Dauerbuchungen übernehmen...</div>
<div class="msep" style="top:333px"></div>
<div class="mi" style="top:342px">Offene Posten löschen...</div>
<div class="mi" style="top:364px">Offene Posten verrechnen...</div>
<div class="msep" style="top:384px"></div>
<div class="mi" style="top:393px">Kosten verteilen...</div>
<svg class="a" style="left:368px;top:267px" width="14" height="22" viewBox="0 0 14 22"><path d="M1.5 1.5v15l3.5-3.5 3 6.5 2.5-1-3-6.5h5z" fill="#fff" stroke="#000" stroke-width="1" stroke-linejoin="round"/></svg>
<svg class="a" style="left:486px;top:232px" width="172" height="40"><path d="M2 36L169 4" stroke="#e0202c" stroke-width="3"/></svg>
<!--MENUE-->
<!--DIALOGS--><div class="a" style="left:654px;top:223px;width:561px;height:487px;background:#f0f0f0;border:1px solid #7a7a7a;box-shadow:5px 5px 9px -1px rgba(0,0,0,.5)"></div>
<div class="a" style="left:655px;top:224px;width:559px;height:25px;background:#fff"></div>
<div class="t" style="left:657px;top:230px;font-size:12px;letter-spacing:0">Zahlung buchen</div>
<svg class="a" style="left:1193px;top:230px" width="12" height="12"><path d="M1 1l10 10M11 1l-10 10" stroke="#000" stroke-width="1.1"/></svg>
<div class="a" style="left:662px;top:263px;width:399px;height:233px;border:1px solid #a0a0a0;box-shadow:inset 1px 1px 0 #fff,1px 1px 0 #fff"></div>
<div class="a" style="left:668px;top:257px;width:102px;height:12px;background:#f0f0f0"></div>
<div class="t" style="left:670px;top:259px;font-size:11px">Offener Posten (13)</div>
<div class="t" style="left:674px;top:275px;font-size:11px">Adresse</div>
<div class="a" style="left:674px;top:289px;width:87px;height:20px;background:#f0f0f0;border:2px solid;border-color:#a0a0a0 #fff #fff #a0a0a0;box-shadow:inset 1px 1px 0 #696969,inset -1px -1px 0 #e3e3e3"></div>
<div class="t" style="left:676px;top:294px;font-size:11px">rotkopf</div>
<div class="t" style="left:770px;top:275px;font-size:11px">Name</div>
<div class="a" style="left:770px;top:289px;width:183px;height:20px;background:#f0f0f0;border:2px solid;border-color:#a0a0a0 #fff #fff #a0a0a0;box-shadow:inset 1px 1px 0 #696969,inset -1px -1px 0 #e3e3e3"></div>
<div class="t" style="left:772px;top:294px;font-size:11px">Firma Rita Rotkopf GmbH</div>
<div class="t" style="left:962px;top:275px;font-size:11px">Konto</div>
<div class="a" style="left:962px;top:289px;width:87px;height:20px;background:#f0f0f0;border:2px solid;border-color:#a0a0a0 #fff #fff #a0a0a0;box-shadow:inset 1px 1px 0 #696969,inset -1px -1px 0 #e3e3e3"></div>
<div class="t" style="left:964px;top:294px;font-size:11px">28000</div>
<div class="t" style="left:674px;top:319px;font-size:11px">Betrag</div>
<div class="a" style="left:674px;top:333px;width:87px;height:20px;background:#f0f0f0;border:2px solid;border-color:#a0a0a0 #fff #fff #a0a0a0;box-shadow:inset 1px 1px 0 #696969,inset -1px -1px 0 #e3e3e3"></div>
<div class="t" style="left:676px;top:338px;font-size:11px">83,91 €</div>
<div class="t" style="left:770px;top:319px;font-size:11px">Bezahlt</div>
<div class="a" style="left:770px;top:333px;width:87px;height:20px;background:#f0f0f0;border:2px solid;border-color:#a0a0a0 #fff #fff #a0a0a0;box-shadow:inset 1px 1px 0 #696969,inset -1px -1px 0 #e3e3e3"></div>
<div class="t" style="left:866px;top:319px;font-size:11px">Ausgleich</div>
<div class="a" style="left:866px;top:333px;width:87px;height:20px;background:#f0f0f0;border:2px solid;border-color:#a0a0a0 #fff #fff #a0a0a0;box-shadow:inset 1px 1px 0 #696969,inset -1px -1px 0 #e3e3e3"></div>
<div class="t" style="left:962px;top:319px;font-size:11px">Restbetrag</div>
<div class="a" style="left:962px;top:333px;width:87px;height:20px;background:#f0f0f0;border:2px solid;border-color:#a0a0a0 #fff #fff #a0a0a0;box-shadow:inset 1px 1px 0 #696969,inset -1px -1px 0 #e3e3e3"></div>
<div class="t" style="left:964px;top:338px;font-size:11px">83,91 €</div>
<div class="t" style="left:674px;top:363px;font-size:11px">Belegnummer</div>
<div class="a" style="left:674px;top:377px;width:87px;height:20px;background:#f0f0f0;border:2px solid;border-color:#a0a0a0 #fff #fff #a0a0a0;box-shadow:inset 1px 1px 0 #696969,inset -1px -1px 0 #e3e3e3"></div>
<div class="t" style="left:676px;top:382px;font-size:11px">201900003</div>
<div class="t" style="left:770px;top:363px;font-size:11px">Belegdatum</div>
<div class="a" style="left:770px;top:377px;width:87px;height:20px;background:#f0f0f0;border:2px solid;border-color:#a0a0a0 #fff #fff #a0a0a0;box-shadow:inset 1px 1px 0 #696969,inset -1px -1px 0 #e3e3e3"></div>
<div class="t" style="left:772px;top:382px;font-size:11px">19.02.2019</div>
<div class="t" style="left:866px;top:363px;font-size:11px">Zieldatum</div>
<div class="a" style="left:866px;top:377px;width:87px;height:20px;background:#f0f0f0;border:2px solid;border-color:#a0a0a0 #fff #fff #a0a0a0;box-shadow:inset 1px 1px 0 #696969,inset -1px -1px 0 #e3e3e3"></div>
<div class="t" style="left:868px;top:382px;font-size:11px">22.02.2019</div>
<div class="t" style="left:962px;top:363px;font-size:11px">Skontofähig</div>
<div class="a" style="left:962px;top:377px;width:87px;height:20px;background:#f0f0f0;border:2px solid;border-color:#a0a0a0 #fff #fff #a0a0a0;box-shadow:inset 1px 1px 0 #696969,inset -1px -1px 0 #e3e3e3"></div>
<div class="t" style="left:964px;top:382px;font-size:11px">83,91 €</div>
<div class="t" style="left:674px;top:407px;font-size:11px">Skontodatum 1</div>
<div class="a" style="left:674px;top:421px;width:87px;height:20px;background:#f0f0f0;border:2px solid;border-color:#a0a0a0 #fff #fff #a0a0a0;box-shadow:inset 1px 1px 0 #696969,inset -1px -1px 0 #e3e3e3"></div>
<div class="t" style="left:770px;top:407px;font-size:11px">Skontodatum 2</div>
<div class="a" style="left:770px;top:421px;width:87px;height:20px;background:#f0f0f0;border:2px solid;border-color:#a0a0a0 #fff #fff #a0a0a0;box-shadow:inset 1px 1px 0 #696969,inset -1px -1px 0 #e3e3e3"></div>
<div class="t" style="left:866px;top:407px;font-size:11px">Skontobetrag 1</div>
<div class="a" style="left:866px;top:421px;width:87px;height:20px;background:#f0f0f0;border:2px solid;border-color:#a0a0a0 #fff #fff #a0a0a0;box-shadow:inset 1px 1px 0 #696969,inset -1px -1px 0 #e3e3e3"></div>
<div class="t" style="left:962px;top:407px;font-size:11px">Skontobetrag 2</div>
<div class="a" style="left:962px;top:421px;width:87px;height:20px;background:#f0f0f0;border:2px solid;border-color:#a0a0a0 #fff #fff #a0a0a0;box-shadow:inset 1px 1px 0 #696969,inset -1px -1px 0 #e3e3e3"></div>
<div class="t" style="left:674px;top:451px;font-size:11px">Buchungstext</div>
<div class="a" style="left:674px;top:465px;width:375px;height:20px;background:#f0f0f0;border:2px solid;border-color:#a0a0a0 #fff #fff #a0a0a0;box-shadow:inset 1px 1px 0 #696969,inset -1px -1px 0 #e3e3e3"></div>
<div class="t" style="left:676px;top:470px;font-size:11px">1. Rechnung Materialverkauf</div>
<div class="a" style="left:1074px;top:265px;width:132px;height:24px;background:#f0f0f0;border:1px solid #000;box-shadow:inset 1px 1px 0 #fff,inset -1px -1px 0 #696969,inset -2px -2px 0 #a0a0a0"></div>
<div class="t" style="left:1074px;top:272px;width:132px;text-align:center;font-size:11px">OK</div>
<div class="a" style="left:1074px;top:293px;width:132px;height:24px;background:#f0f0f0;border:0;box-shadow:inset 1px 1px 0 #fff,inset -1px -1px 0 #696969,inset -2px -2px 0 #a0a0a0"></div>
<div class="t" style="left:1074px;top:300px;width:132px;text-align:center;font-size:11px">Abbrechen</div>
<div class="a" style="left:1074px;top:373px;width:132px;height:24px;background:#f0f0f0;border:0;box-shadow:inset 1px 1px 0 #fff,inset -1px -1px 0 #696969,inset -2px -2px 0 #a0a0a0"></div>
<div class="t" style="left:1074px;top:380px;width:132px;text-align:center;font-size:11px">Skonto ge<u>w</u>ähren</div>
<div class="a" style="left:662px;top:511px;width:543px;height:189px;border:1px solid #a0a0a0;box-shadow:inset 1px 1px 0 #fff,1px 1px 0 #fff"></div>
<div class="a" style="left:668px;top:505px;width:82px;height:12px;background:#f0f0f0"></div>
<div class="t" style="left:670px;top:507px;font-size:11px">Zahlungsinhalte</div>
<div class="t" style="left:674px;top:523px;font-size:11px"><u>Z</u>ahlungsdatum *</div>
<div class="a" style="left:674px;top:537px;width:91px;height:19px;background:#fff;border:2px solid;border-color:#a0a0a0 #fff #fff #a0a0a0;box-shadow:inset 1px 1px 0 #696969,inset -1px -1px 0 #e3e3e3"></div>
<div class="t" style="left:677px;top:542px;font-size:11px">24.04.2019</div>
<div class="t" style="left:774px;top:523px;font-size:11px">Zahl<u>b</u>etrag</div>
<div class="a" style="left:774px;top:537px;width:99px;height:19px;background:#fff;border:2px solid;border-color:#a0a0a0 #fff #fff #a0a0a0;box-shadow:inset 1px 1px 0 #696969,inset -1px -1px 0 #e3e3e3"></div>
<div class="a" style="left:777px;top:540px;width:38px;height:13px;background:#0078d7"></div>
<div class="t" style="left:777px;top:542px;font-size:11px;color:#fff">83,91 €</div>
<div class="t" style="left:882px;top:523px;font-size:11px"><u>S</u>kontobetrag</div>
<div class="a" style="left:882px;top:537px;width:71px;height:19px;background:#fff;border:2px solid;border-color:#a0a0a0 #fff #fff #a0a0a0;box-shadow:inset 1px 1px 0 #696969,inset -1px -1px 0 #e3e3e3"></div>
<div class="t" style="left:962px;top:523px;font-size:11px"><u>A</u>usgleich</div>
<div class="a" style="left:962px;top:537px;width:71px;height:19px;background:#fff;border:2px solid;border-color:#a0a0a0 #fff #fff #a0a0a0;box-shadow:inset 1px 1px 0 #696969,inset -1px -1px 0 #e3e3e3"></div>
<div class="t" style="left:1042px;top:523px;font-size:11px">Mah<u>n</u>gebühr</div>
<div class="a" style="left:1042px;top:537px;width:71px;height:19px;background:#fff;border:2px solid;border-color:#a0a0a0 #fff #fff #a0a0a0;box-shadow:inset 1px 1px 0 #696969,inset -1px -1px 0 #e3e3e3"></div>
<div class="t" style="left:1122px;top:523px;font-size:11px"><u>V</u>erzugszinsen</div>
<div class="a" style="left:1122px;top:537px;width:71px;height:19px;background:#fff;border:2px solid;border-color:#a0a0a0 #fff #fff #a0a0a0;box-shadow:inset 1px 1px 0 #696969,inset -1px -1px 0 #e3e3e3"></div>
<div class="t" style="left:674px;top:567px;font-size:11px">Belegnu<u>m</u>mer</div>
<div class="a" style="left:674px;top:581px;width:91px;height:19px;background:#fff;border:2px solid;border-color:#a0a0a0 #fff #fff #a0a0a0;box-shadow:inset 1px 1px 0 #696969,inset -1px -1px 0 #e3e3e3"></div>
<div class="t" style="left:774px;top:567px;font-size:11px">Steuer<u>a</u>rt</div>
<div class="a" style="left:774px;top:581px;width:99px;height:19px;background:#fff;border:2px solid;border-color:#a0a0a0 #fff #fff #a0a0a0;box-shadow:inset 1px 1px 0 #696969,inset -1px -1px 0 #e3e3e3"></div>
<div class="t" style="left:779px;top:586px;font-size:11px">&lt;Automatisch&gt;</div>
<div class="a" style="left:855px;top:583px;width:16px;height:15px;background:#f0f0f0;border:1px solid;border-color:#fff #696969 #696969 #fff;box-shadow:inset -1px -1px 0 #a0a0a0"></div>
<svg class="a" style="left:859px;top:589px" width="8" height="5"><path d="M0 0h7l-3.5 4z" fill="#000"/></svg>
<div class="t" style="left:882px;top:567px;font-size:11px"><u>G</u>egenkonto</div>
<div class="a" style="left:882px;top:581px;width:311px;height:19px;background:#fff;border:2px solid;border-color:#a0a0a0 #fff #fff #a0a0a0;box-shadow:inset 1px 1px 0 #696969,inset -1px -1px 0 #e3e3e3"></div>
<div class="t" style="left:887px;top:586px;font-size:11px">1200 Hausbank 1</div>
<div class="a" style="left:1175px;top:583px;width:16px;height:15px;background:#f0f0f0;border:1px solid;border-color:#fff #696969 #696969 #fff;box-shadow:inset -1px -1px 0 #a0a0a0"></div>
<svg class="a" style="left:1179px;top:589px" width="8" height="5"><path d="M0 0h7l-3.5 4z" fill="#000"/></svg>
<div class="t" style="left:674px;top:611px;font-size:11px"><u>U</u>nternehmensbereich</div>
<div class="a" style="left:674px;top:626px;width:199px;height:19px;background:#fff;border:2px solid;border-color:#a0a0a0 #fff #fff #a0a0a0;box-shadow:inset 1px 1px 0 #696969,inset -1px -1px 0 #e3e3e3"></div>
<div class="t" style="left:679px;top:631px;font-size:11px">&lt;Kein&gt;</div>
<div class="a" style="left:855px;top:628px;width:16px;height:15px;background:#f0f0f0;border:1px solid;border-color:#fff #696969 #696969 #fff;box-shadow:inset -1px -1px 0 #a0a0a0"></div>
<svg class="a" style="left:859px;top:634px" width="8" height="5"><path d="M0 0h7l-3.5 4z" fill="#000"/></svg>
<div class="t" style="left:882px;top:611px;font-size:11px"><u>K</u>ostenstelle</div>
<div class="a" style="left:882px;top:626px;width:311px;height:19px;background:#fff;border:2px solid;border-color:#a0a0a0 #fff #fff #a0a0a0;box-shadow:inset 1px 1px 0 #696969,inset -1px -1px 0 #e3e3e3"></div>
<div class="t" style="left:887px;top:631px;font-size:11px">&lt;Keine&gt;</div>
<div class="a" style="left:1175px;top:628px;width:16px;height:15px;background:#f0f0f0;border:1px solid;border-color:#fff #696969 #696969 #fff;box-shadow:inset -1px -1px 0 #a0a0a0"></div>
<svg class="a" style="left:1179px;top:634px" width="8" height="5"><path d="M0 0h7l-3.5 4z" fill="#000"/></svg>
<div class="t" style="left:674px;top:655px;font-size:11px"><u>B</u>uchungstext</div>
<div class="a" style="left:674px;top:669px;width:519px;height:19px;background:#fff;border:2px solid;border-color:#a0a0a0 #fff #fff #a0a0a0;box-shadow:inset 1px 1px 0 #696969,inset -1px -1px 0 #e3e3e3"></div><!--DIALOGE-->
</body></html>
